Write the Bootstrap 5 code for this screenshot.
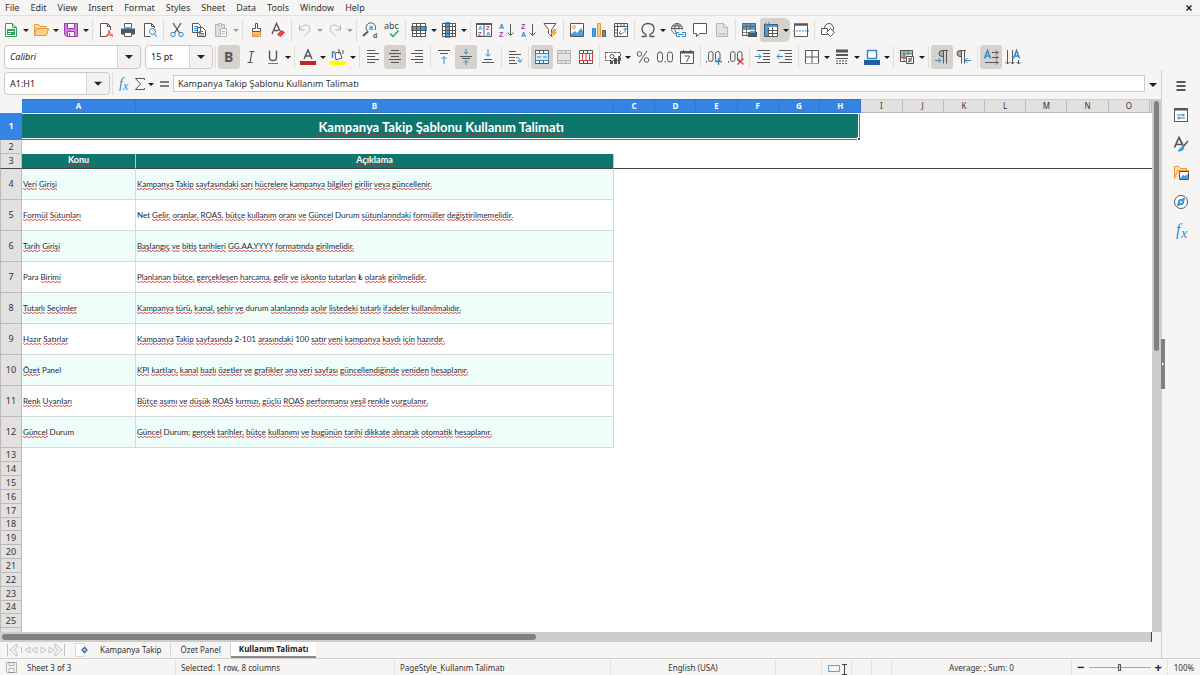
<!DOCTYPE html>
<html lang="tr">
<head>
<meta charset="utf-8">
<meta name="viewport" content="width=device-width, initial-scale=1">
<title>Kampanya Takip</title>
<link rel="stylesheet" href="https://cdn.jsdelivr.net/npm/bootstrap@5.3.0/dist/css/bootstrap.min.css">
<style>
body{font:9px/12px "Noto Sans",sans-serif;color:#333;background:#f6f5f4}
button{background:none;border:0;padding:0;color:inherit}
a{color:inherit;text-decoration:none}
.menu-bar{height:16px;border-bottom:1px solid #e2e0de}
.menu-bar a{padding:1px 6px 0 5px}
.tool-row{height:27px}
.tool{width:22px;height:24px;border-radius:3px;display:flex;align-items:center;justify-content:center;flex:none}
.tool svg,.side svg,.ico{width:16px;height:16px;fill:none;stroke:#565656;stroke-width:1;display:block;overflow:visible}
.drop{width:8px;height:24px;flex:none;display:flex;align-items:center;justify-content:center}
.drop::before{content:"";border:3px solid transparent;border-top:3px solid #1c1c1c;border-bottom:0;margin-top:2px}
.expand::before{border-width:4px 4px 0}
.on{background:#d5d1cd}
.off{opacity:.4}
.rule{width:1px;height:22px;background:#e0dedb;margin:0 2px;flex:none}
svg .bl{stroke:#2f8bd0}svg .bf{fill:#4b9fdc;stroke:none}svg .wf{fill:#fff}svg .gf{fill:#565656;stroke:none}
svg .rd{stroke:#dd3a3a}svg .pu{stroke:#a33ab5}svg .gr{stroke:#2da45a}svg .or{stroke:#e8953a}
svg text{stroke:none;fill:#565656;font-family:"Noto Sans",sans-serif}
svg .az text{font:700 6px "Liberation Sans",sans-serif}
svg .az-lg text{font:700 7px "Liberation Sans",sans-serif}
.combo{height:24px;border:1px solid #cdc9c5;border-radius:4px;background-color:#fff;font-size:9px;color:#222;padding:0 5px;appearance:none;background-repeat:no-repeat;
 background-image:url("data:image/svg+xml,%3Csvg xmlns='http://www.w3.org/2000/svg' width='23' height='22'%3E%3Cpath fill='%23f3f2f1' d='M0 0h23v22H0z'/%3E%3Cpath fill='%23d8d5d2' d='M0 0h1v22H0z'/%3E%3Cpath fill='%23222' d='M8 9h8l-4 4z'/%3E%3C/svg%3E");background-position:right center}
.font-name{width:137px;font-style:italic}
.font-size{width:68px}
.name-box{width:106px;height:23px}
.formula-row{height:30px;padding-bottom:2px}
.formula{height:17px;border:1px solid #cdcbc9;background:#fff;color:#333;padding:0 4px;min-width:0}
.side{width:39px;gap:13px;border-left:1px solid #d2d0ce;padding-top:8px}
.grip{right:-4px;top:269px;width:4px;height:50px;background:#808080;color:#fff}
.grip::before{content:"";position:absolute;top:23px;left:1px;border:2px solid transparent;border-left-color:#fff;border-right:0}
.fit{min-height:0;min-width:0}
.sheet-pane{background:#fff;min-height:0}
.grid-table{width:100%;table-layout:fixed;border-collapse:separate;border-spacing:0}
.grid-table th,.grid-table td{padding:0;overflow:hidden;white-space:nowrap}
.grid-table thead th{height:14px;background:#e3e1df;border-right:1px solid #bdbbb9;border-bottom:1px solid #bdbbb9;border-top:1px solid #cfcdcb;text-align:center;font:8px/12px "Noto Sans",sans-serif;color:#333}
.grid-table thead th.sel{background:#3584e4;color:#fff;font-weight:700;border-color:#3076cf;border-bottom-color:#3076cf}
.grid-table thead th.corner{background:#f6f5f4;border-color:#f6f5f4}
.grid-table tbody th[scope=row]{height:14px;background:#e3e1df;border-right:1px solid #bdbbb9;border-bottom:1px solid #bdbbb9;border-left:1px solid #bdbbb9;text-align:center;font:9px/12px "Noto Sans",sans-serif;color:#333;vertical-align:middle}
.grid-table tbody.blank tr:nth-child(6n) th{height:13px}
.grid-table tbody .r-title th[scope=row]{height:27px;background:#3584e4;color:#fff;font-weight:700;border-color:#3584e4}
.title-cell{position:relative;background:#0f766e;color:#fff;font:700 13px/18px Lato,sans-serif;text-align:center;border:1px solid #fff;border-bottom:0;border-left:0;box-shadow:inset -1px 0 #6d6d6d,inset 0 -1px #6d6d6d,inset -2px 0 #fff,inset 0 -2px #fff}
.handle{position:absolute;right:-1px;bottom:-1px;width:4px;height:4px;background:#555;border:1px solid #eee;border-right:0;border-bottom:0}
.grid-table .r-head td,.grid-table .r-head th[scope=row]{height:15px;border-bottom:1px solid #444}
.grid-table .r-head th[scope=col]{background:#0f766e;color:#fff;font:700 9px/12px Lato,sans-serif;text-align:center;border-right:1px solid #aacdc8;border-bottom:1px solid #444;vertical-align:top}
.grid-table .data th[scope=row]{height:31px}
.data td{font:8px/12px Lato,sans-serif;color:#1f2937;padding-left:1px!important;border-right:1px solid #d5d9db;border-bottom:1px solid #d5d9db;vertical-align:middle}
.data tr:nth-child(odd) td{background:#effdfa}
u{text-decoration:none;padding-bottom:1px;background:url("data:image/svg+xml,%3Csvg xmlns='http://www.w3.org/2000/svg' width='4' height='2'%3E%3Cpath fill='none' stroke='%23e02424' stroke-width='.8' d='M0 .4l2 1.2 2-1.2'/%3E%3C/svg%3E") repeat-x left bottom}
.vbar{width:9px;background:#cdcdcd;padding:2px 2px 0}
.vbar div{width:5px;height:47%;border-radius:3px;background:#808080}
.hbar{height:10px;background:#cdcdcd;padding:2px 0 2px 2px;margin-right:9px;border-right:1px solid #444}
.hbar div{height:6px;width:46.5%;border-radius:3px;background:#808080}
.tabs{height:16px;font-size:8px}
.tabs a{padding:0 9px;border-right:1px solid #d5d3d1;line-height:14px}
.tabs a.active{background:#fff;font-weight:700;border-right:0;border-bottom:2px solid #8a8a8a;height:16px;padding:0 8px;color:#222}
.tab-nav{margin:0 8px 0 5px}
.status{height:17px;border-top:1px solid #d2d0ce;font-size:8px;line-height:16px}
.status>*{flex-basis:0!important;border-right:1px solid #e4e2e0;padding:0 5px;white-space:nowrap;min-width:0;height:15px}
.status>:first-child{flex:0 0 22px!important}
.status>:last-child{flex:0 0 32px!important;border:0}
.zoom-btn{width:8px;height:14px;font:700 13px/13px "Noto Sans",sans-serif;color:#222}
.zoom{appearance:none;background:linear-gradient(#a5a5a5,#a5a5a5) center/100% 1px no-repeat;min-width:0;height:14px}
.zoom::-webkit-slider-thumb{appearance:none;width:3px;height:7px;border:1px solid #555;background:#ddd}
</style>
<script src="https://cdn.jsdelivr.net/npm/bootstrap@5.3.0/dist/js/bootstrap.bundle.min.js"></script>
</head>
<body class="d-flex flex-column vh-100 overflow-hidden">
<header>
<nav class="menu-bar d-flex align-items-center" aria-label="Menu">
<a href="#">File</a><a href="#">Edit</a><a href="#">View</a><a href="#">Insert</a><a href="#">Format</a><a href="#">Styles</a><a href="#">Sheet</a><a href="#">Data</a><a href="#">Tools</a><a href="#">Window</a><a href="#">Help</a>
<button class="ms-auto me-2" aria-label="Close document"><svg width="6" height="6" viewBox="0 0 6 6" class="d-block" stroke="#222" stroke-width="1.5"><path d="M.5.5l5 5M5.500.5l-5 5"/></svg></button>
</nav>

<div class="tool-row d-flex align-items-center" role="toolbar" aria-label="Standard">
<button class="tool" aria-label="New"><svg viewBox="0 0 16 16"><path class="gr wf" d="M2.500 1.500h7l4 4v9h-11z"/><path class="gr" fill="#b9e6c8" d="M9.500 1.500v4h4"/><path fill="#2da45a" stroke="none" d="M4 7h8v6H4z"/><path stroke="#fff" d="M5 9.500h6M5 11.500h3"/></svg></button><button class="drop" aria-label="New options"></button>
<button class="tool" aria-label="Open"><svg viewBox="0 0 16 16"><path fill="#fbdca5" class="or" d="M1.500 13.500v-11h4l1.500 2h6v2"/><path fill="#fbcf8a" class="or" d="M1.500 13.500l2-7h12l-2 7z"/></svg></button><button class="drop" aria-label="Open options"></button>
<button class="tool" aria-label="Save"><svg viewBox="0 0 16 16"><path fill="#cf83da" class="pu" d="M1.500 1.500h13v13h-11l-2-2z"/><path class="wf pu" d="M4.500 1.500h7v5h-7zM4.500 9.500h7v5h-7z"/><path class="pu" d="M6.500 11v3.500"/></svg></button><button class="drop" aria-label="Save options"></button>
<span class="rule"></span>
<button class="tool" aria-label="Export as PDF"><svg viewBox="0 0 16 16"><path class="wf" d="M12.500 8V4.500l-3-3h-7v13h6M9.500 1.500v3h3"/><path class="rd" d="M11 8c0 3-1 5-3 7M11 9c1 3 2 4 4 4M8 13.500c2-1 5-1 7 1"/></svg></button>
<button class="tool" aria-label="Print"><svg viewBox="0 0 16 16"><path class="wf" d="M4.500 1.500h7v5h-7z"/><path d="M1 6.500h14v6H1z" fill="#565656" stroke="none"/><path class="bf" d="M4 5h8v2H4z"/><path class="wf" d="M4.500 10.500h7v4h-7z"/></svg></button>
<button class="tool" aria-label="Print preview"><svg viewBox="0 0 16 16"><path class="wf" d="M12.500 6V4.500l-3-3h-7v13h6M9.500 1.500v3h3"/><circle class="bl" cx="10.500" cy="9.500" r="3"/><path class="bl" d="M12.500 12l2.500 3"/></svg></button>
<span class="rule"></span>
<button class="tool" aria-label="Cut"><svg viewBox="0 0 16 16"><path d="M4 1l6.500 10M12 1L5.500 11" stroke-width="1.300"/><circle class="bl" cx="4" cy="12.500" r="2.200"/><circle class="bl" cx="12" cy="12.500" r="2.200"/></svg></button>
<button class="tool" aria-label="Copy"><svg viewBox="0 0 16 16"><path class="wf" d="M1.500 1.500h6l2 2v7h-8zM6.500 5.500h5l3 3v6h-8z"/><path class="bl" d="M3 4.500h4M3 6.500h3M3 8.500h3M8 9.500h4M8 11.500h5M8 13h5"/></svg></button>
<button class="tool off" aria-label="Paste" disabled><svg viewBox="0 0 16 16"><path fill="#bbb" d="M2.500 2.500h9v12h-9z"/><path class="wf" d="M5.500 1.500h3v2h-3zM7.500 6.500h6v8h-6z"/><path d="M9 9.500h3M9 11.500h3"/></svg></button><button class="drop off" aria-label="Paste options" disabled></button>
<span class="rule"></span>
<button class="tool" aria-label="Clone formatting"><svg viewBox="0 0 16 16"><path class="wf" d="M7.500 1.500h2v5h3v3h-8v-3h3z"/><path class="or" fill="#f7c27c" d="M4.500 10v4.500h8V10M6.500 14v-2M9.500 14v-2"/></svg></button>
<button class="tool" aria-label="Clear formatting"><svg viewBox="0 0 16 16"><path d="M2 12L6.500 1.500 10 9M3.500 8.500h5" stroke-width="1.400"/><path fill="#e34b4b" class="rd" d="M7.500 12.500l4-4 3 2-4 4z"/></svg></button>
<span class="rule"></span>
<button class="tool off" aria-label="Undo" disabled><svg viewBox="0 0 16 16"><path d="M2.500 3v5h5M2.500 8c3-5 6-6 9-4 3 3 1 6-4 10"/></svg></button><button class="drop off" aria-label="Undo list" disabled></button>
<button class="tool off" aria-label="Redo" disabled><svg viewBox="0 0 16 16"><path d="M13.500 3v5h-5M13.500 8c-3-5-6-6-9-4-3 3-1 6 4 10"/></svg></button><button class="drop off" aria-label="Redo list" disabled></button>
<span class="rule"></span>
<button class="tool" aria-label="Find and replace"><svg viewBox="0 0 16 16"><path d="M6 9.500A4.800 4.800 0 1113 8"/><path d="M6 9.500L1 14" stroke-width="1.800"/><g class="az-lg"><text x="7" y="8" style="fill:#2f8bd0">a</text><text x="11" y="15.500">d</text></g></svg></button>
<button class="tool" aria-label="Spelling"><svg viewBox="0 0 16 16"><text x="0" y="7" font-size="9" style="fill:#444">abc</text><path class="gr" stroke-width="1.500" d="M6 11.500l3 3 5.500-6"/></svg></button>
<span class="rule"></span>
<button class="tool" aria-label="Row"><svg viewBox="0 0 16 16"><path class="wf" d="M1.500 1.500h13v13h-13z"/><path class="bf" d="M0 4h16v5H0z"/><path d="M1.500 1.500h13v13h-13zM1.500 4.500h13M1.500 8.500h13M1.500 11.500h13M5.500 1.500v13M9.500 1.500v13"/></svg></button><button class="drop" aria-label="Row options"></button>
<button class="tool" aria-label="Column"><svg viewBox="0 0 16 16"><path class="wf" d="M1.500 1.500h13v13h-13z"/><path class="bf" d="M4 0h5v16H4z"/><path d="M1.500 1.500h13v13h-13zM1.500 4.500h13M1.500 8.500h13M1.500 11.500h13M4.500 1.500v13M8.500 1.500v13M11.500 1.500v13"/></svg></button><button class="drop" aria-label="Column options"></button>
<span class="rule"></span>
<button class="tool" aria-label="Sort"><svg viewBox="0 0 16 16"><path class="wf" d="M.5 1.500h15v13H.5zM8 1.500v13"/><path d="M.5 2h15" stroke-width="2"/><g class="az"><text x="2" y="8" style="fill:#2f8bd0">A</text><text x="2" y="14" style="fill:#a33ab5">Z</text><text x="10" y="8" style="fill:#a33ab5">Z</text><text x="10" y="14" style="fill:#2f8bd0">A</text></g></svg></button>
<button class="tool" aria-label="Sort ascending"><svg viewBox="0 0 16 16"><g class="az-lg"><text x="1" y="7" style="fill:#2f8bd0">A</text><text x="1" y="15" style="fill:#a33ab5">Z</text></g><path d="M12.500 2v11M9.500 10.500l3 3 3-3"/></svg></button>
<button class="tool" aria-label="Sort descending"><svg viewBox="0 0 16 16"><g class="az-lg"><text x="1" y="7" style="fill:#a33ab5">Z</text><text x="1" y="15" style="fill:#2f8bd0">A</text></g><path d="M12.500 2v11M9.500 10.500l3 3 3-3"/></svg></button>
<button class="tool" aria-label="AutoFilter"><svg viewBox="0 0 16 16"><path class="wf" d="M2 1.500h12L9.500 7.500v7l-3-3v-4z"/><path fill="#f5a742" stroke="none" d="M11 7h4l-2 3h2l-5 6 1-4H9z"/></svg></button>
<span class="rule"></span>
<button class="tool" aria-label="Insert image"><svg viewBox="0 0 16 16"><path class="wf" d="M1.500 1.500h13v13h-13z"/><path class="bf" d="M2 12l4-3 2 2 4-5 2 3v5H2z"/><circle class="or" cx="5" cy="5" r="1.500"/></svg></button>
<button class="tool" aria-label="Insert chart"><svg viewBox="0 0 16 16"><path class="bl" fill="#4b9fdc" d="M1.500 6.500h3v8h-3z"/><path class="or" fill="#f8cc8b" d="M6.500 1.500h3v13h-3z"/><path fill="#888" d="M11.500 8.500h3v6h-3z"/></svg></button>
<button class="tool" aria-label="Pivot table"><svg viewBox="0 0 16 16"><path class="wf" d="M1.500 1.500h13v13h-13zM1.500 4.500h13M4.500 1.500v13M8 1.500v3M11 1.500v3M1.500 8h3M1.500 11h3"/><path class="bl" d="M6.500 11c3 2 6-1 6-4M8 9l-2 2 2 2M10.500 8l2-2 2 2"/></svg></button>
<span class="rule"></span>
<button class="tool" aria-label="Special character"><svg viewBox="0 0 16 16"><path stroke-width="1.300" d="M1.500 14.500H6v-2C3 11 2 9 2 7c0-3.500 2.500-5.500 6-5.500S14 3.500 14 7c0 2-1 4-4 5.500v2h4.500"/></svg></button><button class="drop" aria-label="Character list"></button>
<button class="tool" aria-label="Hyperlink"><svg viewBox="0 0 16 16"><path d="M7 12C3 12 1.500 9 1.500 6.500S4 1.500 7 1.500s5.500 2.500 5.500 6M1.500 6.500h11M7 1.500c-3 3-3 7 0 10M7 1.500c2 2 2.500 4 2 6M2.500 4h9"/><path class="bl" d="M9 10.500H6.500v4H10M12 10.500h3.500v4H12M8.500 12.500h5"/></svg></button>
<button class="tool" aria-label="Comment"><svg viewBox="0 0 16 16"><path class="wf" d="M1.500 1.500h13v10H8L4.500 14.500v-3h-3z"/></svg></button>
<button class="tool off" aria-label="Headers and footers" disabled><svg viewBox="0 0 16 16"><path fill="#ccc" d="M2.500 1.500h7l4 4v9h-11zM9.500 1.500v4h4M4 12h8"/></svg></button>
<span class="rule"></span>
<button class="tool" aria-label="Print area"><svg viewBox="0 0 16 16"><path class="wf" d="M1.500 1.500h13v12h-13z"/><path class="bf" d="M1 1h14v6H1z"/><path stroke-width=".7" d="M1.500 1.500h13M1.500 4.500h13M1.500 7.500h13M1.500 10.500h13M1.500 13.500h5M1.500 1.500v12M5.500 1.500v12M9.500 1.500v6M14.500 1.500v8"/><path class="gf" d="M7 10h9v5H7z"/><path class="bf" d="M9 9h5v2H9z"/></svg></button>
<button class="tool on rounded-end-0" aria-label="Freeze rows and columns"><svg viewBox="0 0 16 16"><path class="wf" d="M1.500 2.500h13v12h-13z"/><path class="bf" d="M1 2h14v3H1zM1 2h4v13H1z"/><path d="M1.500 2.500h13v12h-13zM5.500 5.500v9M9.500 5.500v9M5.500 8.500h9M5.500 11.500h9"/><path class="bl" d="M2 1l4 3M6 0v4M2 7l3 3M2 11l3 3"/></svg></button><button class="drop on rounded-end" aria-label="Freeze options"></button>
<button class="tool" aria-label="Split window"><svg viewBox="0 0 16 16"><path d="M1.500 3.500v11h13v-11" class="wf"/><path d="M1 2.500h14" stroke-width="2.500"/><path class="bl" stroke-dasharray="2 1" d="M0 9h16"/></svg></button>
<span class="rule"></span>
<button class="tool" aria-label="Show draw functions"><svg viewBox="0 0 16 16"><circle cx="9" cy="6" r="4.500"/><path class="wf" d="M1.500 6.500h6v6h-6z"/><path class="wf" d="M10.500 6.500l4 4-4 4-4-4z"/></svg></button>
</div>

<div class="tool-row d-flex align-items-center" role="toolbar" aria-label="Formatting">
<select class="combo font-name ms-1" aria-label="Font name"><option>Calibri</option></select>
<select class="combo font-size ms-1" aria-label="Font size"><option>15 pt</option></select>
<span class="rule"></span>
<button class="tool on" aria-label="Bold"><svg viewBox="0 0 16 16"><text x="3" y="13" font-size="14" font-weight="700">B</text></svg></button>
<button class="tool" aria-label="Italic"><svg viewBox="0 0 16 16"><path stroke-width="1.200" d="M6.500 2.500h5M4.500 13.500h5M9 2.500l-2 11"/></svg></button>
<button class="tool" aria-label="Underline"><svg viewBox="0 0 16 16"><path stroke-width="1.400" d="M4.500 1.500v7c0 4 7 4 7 0v-7"/><path class="bl" d="M3 14.500h10"/></svg></button><button class="drop" aria-label="Underline styles"></button>
<span class="rule"></span>
<button class="tool" aria-label="Font color"><svg viewBox="0 0 16 16"><path stroke-width="1.500" d="M4 10l4-9 4 9M5.500 7h5"/><path fill="#c9211e" stroke="none" d="M0 12h16v4H0z"/></svg></button><button class="drop" aria-label="Font colors"></button>
<button class="tool" aria-label="Background color"><svg viewBox="0 0 16 16"><path class="wf" d="M5 4l5-1 2 6-6 2zM9 0v5"/><path class="bl" stroke-width="1.500" d="M5 3H2.500v6"/><path d="M13 5V1"/><path fill="#ff0" stroke="none" d="M0 12h16v4H0z"/></svg></button><button class="drop" aria-label="Background colors"></button>
<span class="rule"></span>
<button class="tool" aria-label="Align left"><svg viewBox="0 0 16 16"><path d="M2 1.500h8M2 4.500h12M2 7.500h8M2 10.500h12M2 13.500h8"/></svg></button>
<button class="tool on" aria-label="Center"><svg viewBox="0 0 16 16"><path d="M4 1.500h8M2 4.500h12M4 7.500h8M2 10.500h12M4 13.500h8"/></svg></button>
<button class="tool" aria-label="Align right"><svg viewBox="0 0 16 16"><path d="M6 1.500h8M2 4.500h12M6 7.500h8M2 10.500h12M6 13.500h8"/></svg></button>
<span class="rule"></span>
<button class="tool" aria-label="Align top"><svg viewBox="0 0 16 16"><path d="M2 1.500h12M4 4.500h8"/><path class="bl" d="M8 15V8M5.500 10L8 7.500l2.500 2.500"/></svg></button>
<button class="tool on" aria-label="Center vertically"><svg viewBox="0 0 16 16"><path d="M2 7.500h12M4 9.500h8"/><path class="bl" d="M8 0v5M6 3l2 2 2-2M8 16v-4.500M6 13.500l2-2 2 2"/></svg></button>
<button class="tool" aria-label="Align bottom"><svg viewBox="0 0 16 16"><path d="M4 10.500h8M2 13.500h12"/><path class="bl" d="M8 0v7M5.500 5L8 7.500 10.500 5"/></svg></button>
<span class="rule"></span>
<button class="tool" aria-label="Wrap text"><svg viewBox="0 0 16 16"><path d="M2 2.500h7M2 5.500h12M2 8.500h6M2 11.500h6M2 14.500h8"/><path class="bl" d="M9 8.500c3 0 4 1 4 4M10.500 11l2.500 2.500 2-3"/></svg></button>
<span class="rule"></span>
<button class="tool on" aria-label="Merge and center"><svg viewBox="0 0 16 16"><path class="wf" d="M1.500 1.500h13v13h-13zM5.500 1.500v3M9.500 1.500v3M5.500 11.500v3M9.500 11.500v3"/><path class="bl" fill="#d8ecfa" d="M1.500 4.500h13v7h-13zM3 8h4M9 8h4"/></svg></button>
<button class="tool off" aria-label="Merge cells" disabled><svg viewBox="0 0 16 16"><path fill="#ccc" d="M1.500 1.500h13v13h-13zM1.500 4.500h13M1.500 11.500h13M5.500 1.500v3M9.500 1.500v3M5.500 11.500v3M9.500 11.500v3"/></svg></button>
<button class="tool" aria-label="Unmerge cells"><svg viewBox="0 0 16 16"><path class="wf" d="M1.500 1.500h13v13h-13zM5.500 1.500v3M9.500 1.500v3M5.500 11.500v3M9.500 11.500v3"/><path class="rd" d="M1.500 4.500h13v7h-13zM4.500 4.500v7M8 4.500v7M11.500 4.500v7"/></svg></button>
<span class="rule"></span>
<button class="tool" aria-label="Currency"><svg viewBox="0 0 16 16"><path class="wf" d="M.5 3.500h15v8H.5z" stroke-dasharray="3 1"/><circle cx="7" cy="7.500" r="2"/><path class="gf" d="M5 12h3v3H5zM9 9h3v6H9zM13 7h2v8h-2z"/></svg></button><button class="drop" aria-label="Currencies"></button>
<button class="tool" aria-label="Percent"><svg viewBox="0 0 16 16"><circle cx="4.500" cy="5" r="2.300"/><circle cx="11.500" cy="11" r="2.300"/><path d="M12 2L4 14"/></svg></button>
<button class="tool" aria-label="Number"><svg viewBox="0 0 16 16"><rect x=".5" y="3" width="5" height="10" rx="2.500"/><path d="M8 12v1.500"/><rect x="10.500" y="3" width="5" height="10" rx="2.500"/></svg></button>
<button class="tool" aria-label="Date"><svg viewBox="0 0 16 16"><path class="wf" d="M1.500 2.500h13v12h-13z"/><path d="M1.500 3.500h13" stroke-width="2"/><path d="M4.500 1v3M11.500 1v3M5.500 7h5l-3 6"/></svg></button>
<span class="rule"></span>
<button class="tool" aria-label="Add decimal place"><svg viewBox="0 0 16 16"><path d="M.5 12v1.500"/><rect x="2.500" y="2.500" width="4.500" height="10" rx="2.200"/><rect x="9.500" y="2.500" width="4.500" height="10" rx="2.200"/><path class="bl" d="M9 12.500h7M12.500 9v7" stroke-width="1.300"/></svg></button>
<button class="tool" aria-label="Delete decimal place"><svg viewBox="0 0 16 16"><path d="M.5 12v1.500"/><rect x="2.500" y="2.500" width="4.500" height="10" rx="2.200"/><rect x="9.500" y="2.500" width="4.500" height="10" rx="2.200"/><path class="rd" d="M9.500 9.500l6 6M15.500 9.500l-6 6" stroke-width="1.300"/></svg></button>
<span class="rule"></span>
<button class="tool" aria-label="Increase indent"><svg viewBox="0 0 16 16"><path d="M2 1.500h13M8 4.500h7M8 7.500h7M8 10.500h7M2 13.500h13"/><path class="bl" d="M0 7.500h6M3.500 5L6 7.500 3.500 10"/></svg></button>
<button class="tool" aria-label="Decrease indent"><svg viewBox="0 0 16 16"><path d="M2 1.500h13M8 4.500h7M8 7.500h7M8 10.500h7M2 13.500h13"/><path class="bl" d="M0 7.500h6M2.500 5L0 7.500 2.500 10"/></svg></button>
<span class="rule"></span>
<button class="tool" aria-label="Borders"><svg viewBox="0 0 16 16"><path class="wf" d="M14.500 14.500v-13h-13v13M8 1.500v13M1.500 8h13"/><path class="or" d="M1 14.500h14"/></svg></button><button class="drop" aria-label="Border list"></button>
<button class="tool" aria-label="Border style"><svg viewBox="0 0 16 16"><path d="M2 2h12" stroke-width="3"/><path d="M2 6h12" stroke-width="2"/><path d="M2 9.500h12"/><path stroke-dasharray="2 1" d="M2 12h12M2 14.500h12"/></svg></button><button class="drop" aria-label="Border styles"></button>
<button class="tool" aria-label="Border color"><svg viewBox="0 0 16 16"><path class="bl" fill="#fff" d="M3.500 1.500h9v8h-9z" stroke-width="1.500"/><path fill="#20609f" stroke="none" d="M0 11h16v5H0z"/></svg></button><button class="drop" aria-label="Border colors"></button>
<span class="rule"></span>
<button class="tool" aria-label="Conditional formatting"><svg viewBox="0 0 16 16"><path class="wf" d="M1.500 1.500h12v11h-12z"/><path fill="#8fd6a4" stroke="none" d="M2 2h11v3H2z"/><path fill="#f08b82" stroke="none" d="M2 6h5v3H2z"/><path stroke-width=".8" d="M1.500 1.500h12v11h-12zM1.500 5h12M1.500 9h12M5 1.500v11M9 1.500v5"/><path class="wf" d="M7.500 7.500h7v7h-7zM9 10h4M9 12h4M12.500 8.500l-3 5"/></svg></button><button class="drop" aria-label="Conditional options"></button>
<span class="rule"></span>
<button class="tool on" aria-label="Left to right"><svg viewBox="0 0 16 16"><path d="M9 1.500h5M12.500 1.500v13M9.500 1.500v13"/><path fill="#aaa" d="M9.500 1.500H8a3 3 0 000 6h1.500z"/><path class="bl" d="M1 11.500h6M4.500 9L7 11.500 4.500 14"/></svg></button>
<button class="tool" aria-label="Right to left"><svg viewBox="0 0 16 16"><path d="M5 1.500h5M8.500 1.500v13M5.500 1.500v13"/><path fill="#aaa" d="M5.500 1.500H4a3 3 0 000 6h1.500z"/><path class="bl" d="M9 11.500h6M11.500 9L9 11.500l2.500 2.500"/></svg></button>
<span class="rule"></span>
<button class="tool on" aria-label="Text left to right"><svg viewBox="0 0 16 16"><path class="bl" stroke-width="1.500" d="M1.500 9.500l3-8 3 8M2.500 7h4"/><path d="M9 3.500h6M9 8.500h6M13 1.500l2 2-2 2M13 6.500l2 2-2 2M2 13.500h13M13 11.500l2 2-2 2"/></svg></button>
<button class="tool" aria-label="Text top to bottom"><svg viewBox="0 0 16 16"><path class="bl" stroke-width="1.500" d="M8.500 9.500l3-8 3 8M9.500 7h4"/><path d="M2.500 1v14M.5 13l2 2 2-2M7.500 1v14M5.500 13l2 2 2-2M13.500 11v4M11.500 13l2 2 2-2"/></svg></button>
</div>
</header>

<main class="d-flex flex-grow-1 fit">
<div class="d-flex flex-column flex-grow-1 position-relative fit">
<div class="formula-row d-flex align-items-center">
<input class="combo name-box ms-1" aria-label="Name box" value="A1:H1">
<span class="rule"></span>
<button class="tool" style="width:18px" aria-label="Function wizard"><svg viewBox="0 0 16 16"><text x="3" y="12" font-size="14" font-style="italic" style="fill:#2f8bd0;font-family:'Liberation Serif'">f</text><text x="7" y="14" font-size="12" font-style="italic" style="fill:#2f8bd0;font-family:'Liberation Serif'">x</text></svg></button>
<button class="tool" style="width:14px" aria-label="Select function"><svg viewBox="0 0 16 16"><path d="M12.500 4V2.500h-9L8.500 8l-5 5.500h9V12"/></svg></button><button class="drop" aria-label="Functions"></button>
<button class="tool" style="width:18px" aria-label="Formula"><svg viewBox="0 0 16 16"><path stroke-width="1.500" d="M4 6h9M4 10h9"/></svg></button>
<input class="formula flex-grow-1" aria-label="Input line" value="Kampanya Takip Şablonu Kullanım Talimatı">
<button class="drop expand me-1 ms-1" aria-label="Expand formula bar"></button>
</div>
<div class="d-flex flex-grow-1 fit">
<div class="sheet-pane flex-grow-1 overflow-hidden" id="sheet">
<table class="grid-table">
<colgroup><col style="width:22px"><col style="width:114px"><col style="width:478px"><col><col><col><col><col><col><col><col><col><col><col><col><col><col style="width:2px"></colgroup>
<thead><tr><th class="corner"></th><th class="sel">A</th><th class="sel">B</th><th class="sel">C</th><th class="sel">D</th><th class="sel">E</th><th class="sel">F</th><th class="sel">G</th><th class="sel">H</th><th>I</th><th>J</th><th>K</th><th>L</th><th>M</th><th>N</th><th>O</th><th></th></tr></thead>
<tbody>
<tr class="r-title"><th scope="row">1</th><td class="title-cell" colspan="8"><u>Kampanya</u> <u>Takip</u> <u>Şablonu</u> <u>Kullanım</u> <u>Talimatı</u><span class="handle"></span></td><td colspan="8"></td></tr>
<tr><th scope="row">2</th><td colspan="16"></td></tr>
<tr class="r-head"><th scope="row">3</th><th scope="col"><u>Konu</u></th><th scope="col"><u>Açıklama</u></th><td colspan="14"></td></tr>
</tbody>
<tbody class="data">
<tr><th scope="row">4</th><td><u>Veri</u> <u>Girişi</u></td><td><u>Kampanya</u> <u>Takip</u> <u>sayfasındaki</u> <u>sarı</u> <u>hücrelere</u> <u>kampanya</u> <u>bilgileri</u> <u>girilir</u> <u>veya</u> <u>güncellenir.</u></td></tr>
<tr><th scope="row">5</th><td><u>Formül</u> <u>Sütunları</u></td><td>Net <u>Gelir,</u> <u>oranlar,</u> <u>ROAS,</u> <u>bütçe</u> <u>kullanım</u> <u>oranı</u> <u>ve</u> <u>Güncel</u> Durum <u>sütunlarındaki</u> <u>formüller</u> <u>değiştirilmemelidir.</u></td></tr>
<tr><th scope="row">6</th><td><u>Tarih</u> <u>Girişi</u></td><td><u>Başlangıç</u> <u>ve</u> <u>bitiş</u> <u>tarihleri</u> <u>GG.AA.YYYY</u> <u>formatında</u> <u>girilmelidir.</u></td></tr>
<tr><th scope="row">7</th><td>Para <u>Birimi</u></td><td><u>Planlanan</u> <u>bütçe,</u> <u>gerçekleşen</u> <u>harcama,</u> <u>gelir</u> <u>ve</u> <u>iskonto</u> <u>tutarları</u> ₺ <u>olarak</u> <u>girilmelidir.</u></td></tr>
<tr><th scope="row">8</th><td><u>Tutarlı</u> <u>Seçimler</u></td><td><u>Kampanya</u> <u>türü,</u> <u>kanal,</u> <u>şehir</u> <u>ve</u> durum <u>alanlarında</u> <u>açılır</u> <u>listedeki</u> <u>tutarlı</u> <u>ifadeler</u> <u>kullanılmalıdır.</u></td></tr>
<tr><th scope="row">9</th><td><u>Hazır</u> <u>Satırlar</u></td><td><u>Kampanya</u> <u>Takip</u> <u>sayfasında</u> 2-101 <u>arasındaki</u> 100 <u>satır</u> <u>yeni</u> <u>kampanya</u> <u>kaydı</u> <u>için</u> <u>hazırdır.</u></td></tr>
<tr><th scope="row">10</th><td><u>Özet</u> Panel</td><td><u>KPI</u> <u>kartları,</u> <u>kanal</u> <u>bazlı</u> <u>özetler</u> <u>ve</u> <u>grafikler</u> <u>ana</u> <u>veri</u> <u>sayfası</u> <u>güncellendiğinde</u> <u>yeniden</u> <u>hesaplanır.</u></td></tr>
<tr><th scope="row">11</th><td><u>Renk</u> <u>Uyarıları</u></td><td><u>Bütçe</u> <u>aşımı</u> <u>ve</u> <u>düşük</u> <u>ROAS</u> <u>kırmızı,</u> <u>güçlü</u> <u>ROAS</u> <u>performansı</u> <u>yeşil</u> <u>renkle</u> <u>vurgulanır.</u></td></tr>
<tr><th scope="row">12</th><td><u>Güncel</u> Durum</td><td><u>Güncel</u> Durum; <u>gerçek</u> <u>tarihler,</u> <u>bütçe</u> <u>kullanımı</u> <u>ve</u> <u>bugünün</u> <u>tarihi</u> <u>dikkate</u> <u>alınarak</u> <u>otomatik</u> <u>hesaplanır.</u></td></tr>
</tbody>
<tbody class="blank">
<tr><th scope="row">13</th></tr><tr><th scope="row">14</th></tr><tr><th scope="row">15</th></tr><tr><th scope="row">16</th></tr><tr><th scope="row">17</th></tr><tr><th scope="row">18</th></tr><tr><th scope="row">19</th></tr><tr><th scope="row">20</th></tr><tr><th scope="row">21</th></tr><tr><th scope="row">22</th></tr><tr><th scope="row">23</th></tr><tr><th scope="row">24</th></tr><tr><th scope="row">25</th></tr><tr><th scope="row"></th></tr>
</tbody>
</table>
</div>
<div class="vbar" role="scrollbar" aria-controls="sheet" aria-valuenow="0"><div></div></div>
</div>
<div class="hbar" role="scrollbar" aria-controls="sheet" aria-valuenow="0"><div></div></div>
<nav class="tabs d-flex align-items-center" aria-label="Sheets">
<svg class="tab-nav" width="62" height="14" viewBox="0 0 62 14" fill="none" stroke="#c4c2c0"><path d="M2.500 1v12M12 1L5 7l7 6v-3.500L9 7l3-2.500zM16.500 4v6M25 4l-5 3 5 3zM32 4l-5 3 5 3zM36 4l5 3-5 3zM44 4l5 3-5 3zM50 1l7 6-7 6V9.500L53 7l-3-2.500zM59.500 1v12"/></svg>
<button aria-label="Add sheet"><svg width="16" height="14" viewBox="0 0 16 14" class="d-block"><path fill="#fff" stroke="#dad8d6" d="M.5.5h9v13h-9z"/><path fill="none" stroke="#2465ac" stroke-width="1.300" d="M9.500 4.500L12 7 9.500 9.500 7 7z"/></svg></button>
<a class="ms-0" href="#">Kampanya Takip</a><a href="#">Özet Panel</a><a class="active" href="#">Kullanım Talimatı</a>
</nav>
<div class="grip position-absolute"></div>
</div>
<aside class="side d-flex flex-column align-items-center flex-shrink-0" aria-label="Sidebar">
<button aria-label="Sidebar settings"><svg viewBox="0 0 16 16"><path stroke="#222" stroke-width="1.500" d="M3.500 4h9M3.500 8h9M3.500 12h9"/></svg></button>
<button aria-label="Properties"><svg viewBox="0 0 16 16"><path class="wf" d="M1.500 1.500h13v13h-13z"/><path d="M1.500 2.500h13" stroke-width="2"/><path class="bl" d="M4 8h8M4 11h8M10 6.500v3M6 9.500v3"/></svg></button>
<button aria-label="Styles"><svg viewBox="0 0 16 16"><path stroke-width="1.700" d="M1.500 11.500L6 1.500l4 8M3 8.500h6"/><path d="M15 5l-5 6" stroke-width="1.500"/><path class="bl" fill="#4b9fdc" d="M5 15c2-1 2-4 5-4 2 2-1 4-5 4z"/></svg></button>
<button aria-label="Gallery"><svg viewBox="0 0 16 16"><path class="or" fill="#fde2b3" d="M1.500 13.500v-12h4l2 2h6v2M1.500 13.500l3-8h11v3"/><path class="wf" d="M6.500 6.500h9v8h-9z"/><path class="bf" d="M7 13l3-3 2 1 3-2v5H7z"/></svg></button>
<button aria-label="Navigator"><svg viewBox="0 0 16 16"><circle class="wf" cx="8" cy="8" r="6.500"/><path class="bl" fill="#4b9fdc" d="M11.500 4.500L10 10l-5.500 1.500L6 6z"/><circle class="wf" cx="8" cy="8" r="1" stroke="none"/></svg></button>
<button aria-label="Functions"><svg viewBox="0 0 16 16"><text x="3" y="12" font-size="16" font-style="italic" style="fill:#2f8bd0;font-family:'Liberation Serif'">f</text><text x="8" y="15" font-size="14" font-style="italic" style="fill:#2f8bd0;font-family:'Liberation Serif'">x</text></svg></button>
</aside>
</main>

<footer class="status d-flex align-items-center">
<div class="border-0"><svg class="ico off" viewBox="0 0 16 16"><path d="M1.500 2.500h10v10h-9l-1-1zM4 2.500h5v3H4zM4 8.500h5v4H4z"/></svg></div>
<div style="flex-grow:143">Sheet 3 of 3</div>
<div style="flex-grow:208">Selected: 1 row, 8 columns</div>
<div style="flex-grow:205">PageStyle_Kullanım Talimatı</div>
<div style="flex-grow:154" class="text-center">English (USA)</div>
<div style="flex-grow:35"></div>
<div style="flex-grow:19"><svg width="20" height="12" viewBox="0 0 20 12" class="d-block mt-1" fill="none"><path stroke="#5aa5d6" d="M1.500 1.500h11v6h-11z"/><path stroke="#444" d="M15 .5h5M17.500.5v10M15 10.500h5"/></svg></div>
<div style="flex-grow:9"></div>
<div style="flex-grow:9"></div>
<div style="flex-grow:169" class="text-center">Average: ; Sum: 0</div>
<div style="flex-grow:85" class="d-flex align-items-center gap-1"><button class="zoom-btn" aria-label="Zoom out">−</button><input class="zoom flex-grow-1" type="range" aria-label="Zoom" min="0" max="100" value="50"><button class="zoom-btn" aria-label="Zoom in">+</button></div>
<div class="text-center">100%</div>
</footer>
</body>
</html>
